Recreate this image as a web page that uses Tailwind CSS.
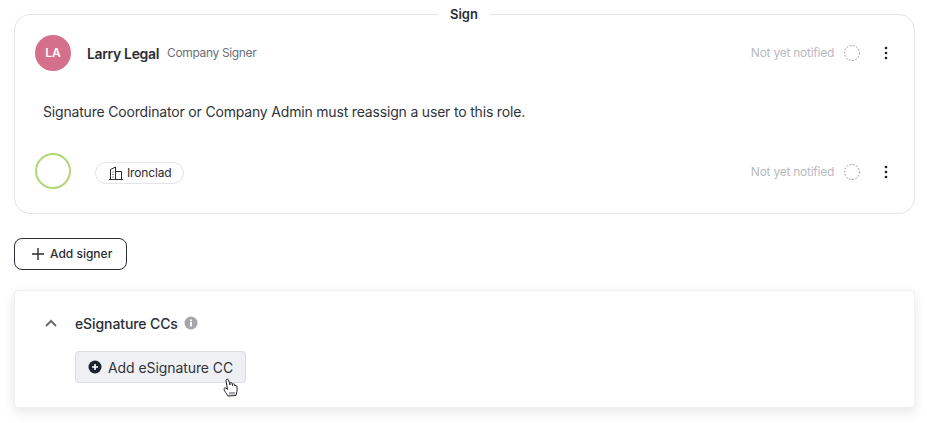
<!DOCTYPE html>
<html lang="en">
<head>
    <meta charset="UTF-8">
    <title>Sign</title>
    <script src="https://cdn.jsdelivr.net/npm/@tailwindcss/browser@4"></script>
</head>
<body class="bg-white font-['Inter',sans-serif] text-[#2a2d34] overflow-hidden">

    <main class="w-[927px] h-[423px] px-[14px] pt-[14px]">

        <!-- signers card -->
        <section class="relative h-[200px] w-[901px] rounded-[16px] border border-[#e3e3ea] bg-white">
            <span class="absolute -top-[10px] left-[423px] bg-white px-[12px] text-[13px] leading-[18px] font-semibold">Sign</span>

            <div class="flex items-center h-[36px] mt-[20px] pl-[20px] pr-[20px]">
                <div class="w-[36px] h-[36px] rounded-full bg-[#d5708c] text-white text-[12px] font-semibold flex items-center justify-center">LA</div>
                <span class="ml-[16px] text-[14px] font-semibold tracking-[-0.35px]">Larry Legal</span>
                <span class="ml-[8px] text-[12px] text-[#6c6f7a] tracking-[-0.35px]">Company Signer</span>
                <span class="ml-auto text-[12px] text-[#b9bac1] tracking-[-0.25px]">Not yet notified</span>
                <svg class="ml-[10px]" width="16" height="16" viewBox="0 0 16 16" fill="none" stroke="#85868e" stroke-width="1" stroke-dasharray="1.500 1.800"><circle cx="8" cy="8" r="7.500"/></svg>
                <svg class="ml-[18px]" width="16" height="16" viewBox="0 0 16 16" fill="#1c1f26"><circle cx="8" cy="3" r="1.300"/><circle cx="8" cy="8" r="1.300"/><circle cx="8" cy="13" r="1.300"/></svg>
            </div>

            <p class="mt-[31px] ml-[28px] text-[14px] leading-[20px] text-[#30333a] tracking-[-0.18px]">Signature Coordinator or Company Admin must reassign a user to this role.</p>

            <div class="flex items-center h-[36px] mt-[31px] pl-[20px] pr-[20px]">
                <div class="w-[36px] h-[36px] rounded-full border-2 border-[#b3d676]"></div>
                <div class="ml-[24px] mt-[3px] h-[22px] pl-[12px] pr-[12px] rounded-full border border-[#e3e3ea] flex items-center gap-[3px] text-[12px] font-normal tracking-[-0.15px]">
                    <svg width="16" height="16" viewBox="0 0 16 16" fill="none" stroke="#2a2d34" stroke-width="1"><path d="M1 14.500h14M2.500 14.500V4.500L7.500 2v12.500M7.500 6.500h6v8M4.500 7h1M4.500 9.500h1M4.500 12h1"/></svg>
                    <span>Ironclad</span>
                </div>
                <span class="ml-auto mt-[2px] text-[12px] text-[#b9bac1] tracking-[-0.25px]">Not yet notified</span>
                <svg class="ml-[10px] mt-[2px]" width="16" height="16" viewBox="0 0 16 16" fill="none" stroke="#85868e" stroke-width="1" stroke-dasharray="1.500 1.800"><circle cx="8" cy="8" r="7.500"/></svg>
                <svg class="ml-[18px] mt-[2px]" width="16" height="16" viewBox="0 0 16 16" fill="#1c1f26"><circle cx="8" cy="3" r="1.300"/><circle cx="8" cy="8" r="1.300"/><circle cx="8" cy="13" r="1.300"/></svg>
            </div>
        </section>

        <button class="mt-[24px] h-[32px] w-[113px] rounded-[8px] border border-[#2a2d34] bg-white flex items-center pl-[17px] gap-[6px] text-[12px] font-medium">
            <svg width="12" height="12" viewBox="0 0 12 12" fill="none" stroke="#2a2d34" stroke-width="1.400"><path d="M6 0v12M0 6h12"/></svg>
            Add signer
        </button>

        <!-- cc panel -->
        <section class="relative mt-[20px] h-[118px] w-[901px] rounded-[4px] border border-[#f0f0f3] bg-white shadow-[0_4px_12px_rgba(0,0,0,0.1)]">
            <div class="flex items-center h-[20px] mt-[22px] pl-[30px]">
                <svg width="12" height="8" viewBox="0 0 12 8" fill="none" stroke="#6b6d75" stroke-width="2"><path d="M1 7l5-5 5 5"/></svg>
                <span class="ml-[18px] text-[14px] font-medium tracking-[-0.1px]">eSignature CCs</span>
                <svg class="ml-[6px]" width="14" height="14" viewBox="0 0 14 14"><circle cx="7" cy="7" r="6.500" fill="#a5a6ac"/><rect x="6" y="6" width="2" height="4.500" fill="#fff"/><rect x="6" y="3.500" width="2" height="1.600" fill="#fff"/></svg>
            </div>
            <button class="ml-[60px] mt-[18px] h-[32px] w-[171px] rounded-[4px] border border-[#dcdde3] bg-[#eff0f4] flex items-center pl-[12px] gap-[6px] text-[14px] text-[#30333a] tracking-[-0.08px]">
                <svg width="14" height="14" viewBox="0 0 14 14"><circle cx="7" cy="7" r="6.500" fill="#1c2330"/><path d="M7 4v6M4 7h6" stroke="#fff" stroke-width="1.600"/></svg>
                Add eSignature CC
            </button>
            <!-- hand cursor -->
            <svg class="absolute left-[208px] top-[87px]" width="18" height="20" viewBox="0 0 18 20" fill="#fff" stroke="#1c1f26" stroke-width="1" stroke-linejoin="round"><path d="M5 18c-1-2-4-5-4-7 0-1 1-1.500 2-1l1.500 1.500L3 2.500C3 1 5 .700 5.500 2l1.500 5V5.500c0-1.200 2-1.200 2.200 0L9.500 7.500V6.500c0-1 2-1 2.100.2l.3 1.300c.2-1 1.900-.7 2 .4.300 2 .4 4.600-.4 6.600l-.5 2.500z"/><path d="M7 14v2.500M9 14v2.500M11 14v2.500" stroke-width=".8"/></svg>
        </section>

    </main>
</body>
</html>
